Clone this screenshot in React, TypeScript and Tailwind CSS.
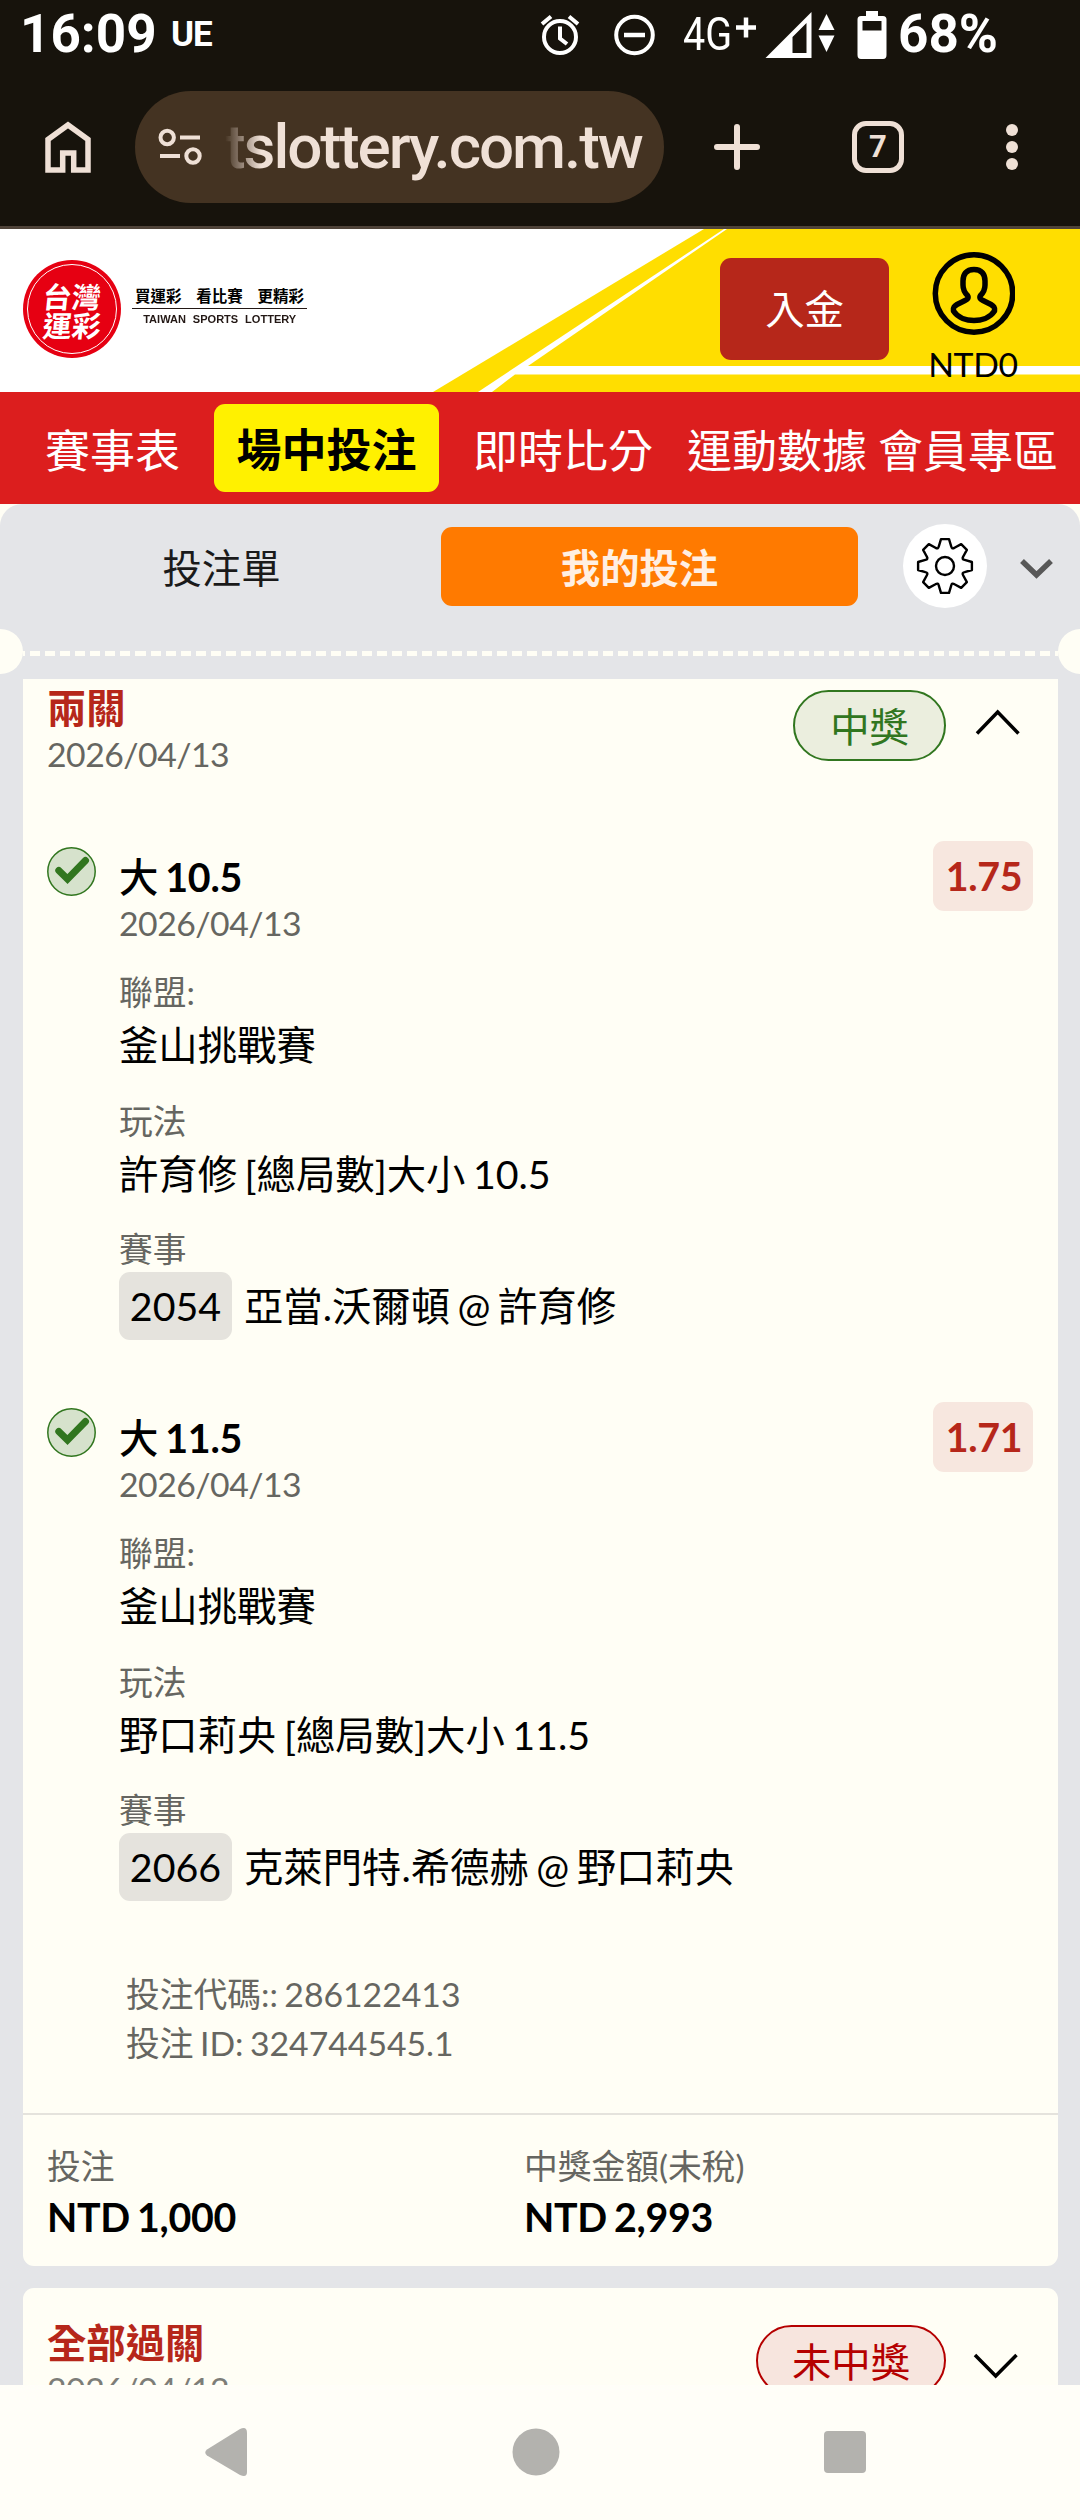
import React from "react";

const CJK = "font-['Lato','Noto_Sans_CJK_TC',sans-serif]";

function polar(angle: number, r: number) {
  const a = (angle * Math.PI) / 180;
  return `${(42 + r * Math.sin(a)).toFixed(2)} ${(42 - r * Math.cos(a)).toFixed(2)}`;
}

function gearPath() {
  let d = "";
  for (let i = 0; i < 8; i++) {
    const c = i * 45;
    d += `${i === 0 ? "M" : "L"}${polar(c - 8.5, 27.2)}L${polar(c + 8.5, 27.2)}`;
    d += `L${polar(c + 17.5, 20.6)}Q${polar(c + 22.5, 17.8)} ${polar(c + 27.5, 20.6)}`;
  }
  return d + "Z";
}

function StatusBar() {
  return (
    <div className="flex h-[68px] items-center bg-[#17130c] pl-[20px] font-['Roboto',sans-serif] text-white">
      <span className="w-[151px] text-[53px] leading-[66px] font-bold">16:09</span>
      <span className="mt-[2px] w-[46px] text-[35px] leading-[66px] font-bold tracking-[-1px]">UE</span>
      <svg className="ml-[321px]" width="44" height="66" viewBox="0 0 44 66" fill="none" stroke="#fff" strokeWidth="4">
        <circle cx="22" cy="36" r="16" />
        <path d="M22 25.500V37.500L29 43" strokeWidth="4" />
        <path d="M4 23L13 15.500M40 23L31 15.500" />
      </svg>
      <svg className="ml-[30px]" width="44" height="66" viewBox="0 0 44 66" fill="none" stroke="#fff" strokeWidth="4">
        <circle cx="22.500" cy="34" r="18.300" />
        <path d="M12 34H33" strokeWidth="4.500" />
      </svg>
      <span className="relative ml-[27px] block h-[66px] w-[81px]">
        <span className="block origin-left scale-x-[0.840] text-[47px] leading-[66px] font-normal">4G</span>
        <svg className="absolute top-0 left-0" width="81" height="66" viewBox="0 0 81 66">
          <path d="M53 26.500H73M63 16.500V36.500" stroke="#fff" strokeWidth="4.500" />
        </svg>
      </span>
      <svg width="72" height="66" viewBox="0 0 72 66" fill="#fff">
        <path fillRule="evenodd" d="M1.500 57L47.500 11V57ZM28.500 36V52H42.500V22Z" />
        <path d="M62.500 13L70.500 29H54.500ZM62.500 51L70.500 34.500H54.500Z" />
      </svg>
      <svg className="ml-[21px]" width="32" height="66" viewBox="0 0 32 66">
        <path fill="#fff" fillRule="evenodd" d="M9 10H21V15H26Q29.500 15 29.500 18.500V54Q29.500 58 26 58H4Q0.500 58 0.500 54V18.500Q0.500 15 4 15H9ZM5.500 20V29.500H24.500V20Z" />
      </svg>
      <span className="ml-[9px] text-[53px] leading-[66px] font-bold">68%</span>
    </div>
  );
}

function BrowserBar() {
  return (
    <div className="flex h-[161px] items-start border-b-[3px] border-[#4f4339] bg-[#17130c] pt-[23px]">
      <svg className="ml-[40px]" width="56" height="112" viewBox="0 0 56 112" fill="none" stroke="#efe0d6" strokeWidth="5.500">
        <path d="M8 79V48.500L28 34L48 48.500V79H33.700V62H22.700V79Z" />
      </svg>
      <div className="ml-[39px] flex h-[112px] w-[529px] items-center rounded-full bg-[#443322]">
        <svg className="ml-[22px]" width="48" height="44" viewBox="0 0 48 44" fill="none" stroke="#efe0d6" strokeWidth="4">
          <circle cx="10.200" cy="12.500" r="6.700" />
          <circle cx="36" cy="31" r="6.700" />
          <path d="M23 12.500H43M3 31H23" />
        </svg>
        <span className="ml-[20px] w-[430px] bg-[linear-gradient(90deg,#44332200_0px,#efe0d6_36px)] bg-clip-text font-['Roboto',sans-serif] text-[62px] leading-[82px] font-medium tracking-[-2.050px] whitespace-nowrap text-transparent">
          tslottery.com.tw
        </span>
      </div>
      <svg className="ml-[48px]" width="50" height="112" viewBox="0 0 50 112" stroke="#efe0d6" strokeWidth="6" strokeLinecap="round">
        <path d="M5 56H45M25 36V76" />
      </svg>
      <div className="mt-[30px] ml-[90px] flex h-[52px] w-[52px] items-center justify-center rounded-[14px] border-[5.500px] border-[#efe0d6] font-['Roboto',sans-serif] text-[31px] font-bold text-[#efe0d6]">
        7
      </div>
      <svg className="ml-[102px]" width="12" height="112" viewBox="0 0 12 112" fill="#efe0d6">
        <circle cx="6" cy="39" r="6" />
        <circle cx="6" cy="56" r="6" />
        <circle cx="6" cy="73" r="6" />
      </svg>
    </div>
  );
}

function SiteHeader() {
  return (
    <header className="relative flex h-[163px] items-start overflow-hidden bg-white">
      <svg className="absolute inset-0" width="1080" height="163" viewBox="0 0 1080 163" fill="#ffde00">
        <path d="M704 0H724L478 163H433Z" />
        <path d="M727 0H1080V137H528Z" />
        <path d="M515 145.500H1080V163H492Z" />
      </svg>
      <div className="relative mt-[31px] ml-[23px] flex h-[98px] w-[98px] items-center justify-center rounded-full bg-[#e60012]">
        <div className="flex h-[90px] w-[90px] flex-col items-center justify-center rounded-full border-[1.500px] border-white pt-[1px] font-['Noto_Sans_CJK_TC',sans-serif] text-[29px] font-bold text-white">
          <span className="-skew-x-6 leading-[29px]">台灣</span>
          <span className="-skew-x-6 leading-[29px]">運彩</span>
        </div>
      </div>
      <div className="relative mt-[54px] ml-[11px] flex w-[175px] flex-col items-center">
        <div className="flex h-[26px] w-full justify-between border-b border-[#231815] px-[3px] font-['Noto_Sans_CJK_TC',sans-serif] text-[15.500px] leading-[25px] font-bold text-black">
          <span>買運彩</span>
          <span>看比賽</span>
          <span>更精彩</span>
        </div>
        <span className="mt-[3px] font-['Liberation_Sans',sans-serif] text-[11.500px] leading-[15px] font-bold whitespace-nowrap text-[#231815] [word-spacing:4px]">
          <span className="inline-block scale-x-[0.960]">TAIWAN SPORTS LOTTERY</span>
        </span>
      </div>
      <button className={`relative mt-[29px] ml-[413px] h-[102px] w-[169px] rounded-[11px] bg-[#b6271a] text-[39.375px] leading-[102px] text-white ${CJK}`}>
        入金
      </button>
      <div className="relative mt-[23px] ml-[40px] flex w-[88px] flex-col items-center">
        <svg width="84" height="84" viewBox="0 0 84 84" fill="none" stroke="#000" strokeWidth="5.500" strokeLinejoin="round">
          <circle cx="43" cy="41.500" r="38.700" />
          <path d="M43 17.500C35 17.500 32 22.500 32 29V33C32 37 33.500 40.500 36.500 43.500C38 46 36.500 47.300 34 48.500L26 52.500C21.500 55 22.500 57 22.500 59C27 66 36 68.500 43 68.500S59 66 63.500 59C63.500 57 64.500 55 60 52.500L52 48.500C49.500 47.300 48 46 49.500 43.500C52.500 40.500 54 37 54 33V29C54 22.500 51 17.500 43 17.500Z" />
        </svg>
        <span className="mt-[8px] font-['Lato',sans-serif] text-[33.750px] leading-[40px] tracking-[-0.300px] text-black">NTD0</span>
      </div>
    </header>
  );
}

function MainNav() {
  return (
    <nav className={`flex h-[112px] items-center bg-[#dc1e1e] text-[45px] leading-[88px] whitespace-nowrap text-white ${CJK}`}>
      <span className="mt-[5px] ml-[45px]">賽事表</span>
      <span className="ml-[34px] h-[88px] w-[225px] rounded-[11px] bg-[#fff100] text-center leading-[92px] font-bold text-black">場中投注</span>
      <span className="mt-[5px] ml-[34px]">即時比分</span>
      <span className="mt-[5px] ml-[34px]">運動數據</span>
      <span className="mt-[5px] ml-[11px]">會員專區</span>
    </nav>
  );
}

function SlipTabs() {
  return (
    <div className={`flex h-[125px] items-start pt-[20px] text-[39.375px] ${CJK}`}>
      <span className="mt-[4px] w-[441px] pl-[2px] text-center leading-[79px] text-[#1a1a1a]">投注單</span>
      <span className="mt-[3px] h-[79px] w-[417px] rounded-[11px] bg-[#ff7a00] pr-[20px] text-center leading-[82px] font-bold text-[#ffefe3]">我的投注</span>
      <svg className="ml-[45px] rounded-full bg-white" width="84" height="84" viewBox="0 0 84 84" fill="none" stroke="#000" strokeWidth="2.400" strokeLinejoin="round">
        <path d={gearPath()} />
        <circle cx="42" cy="42" r="9" />
      </svg>
      <svg className="ml-[33px]" width="33" height="84" viewBox="0 0 33 84" fill="none" stroke="#585858" strokeWidth="5.500">
        <path d="M2 37L16.500 51L31 37" />
      </svg>
    </div>
  );
}

function Perforation() {
  return (
    <div className="flex h-[50px] items-start justify-between overflow-hidden">
      <div className="-ml-[22px] h-[45px] w-[45px] shrink-0 rounded-full bg-[#fffef5]" />
      <div className="mt-[22px] h-[5px] flex-1 bg-[repeating-linear-gradient(90deg,#fffef5_0px,#fffef5_2px,transparent_2px,transparent_7px,#fffef5_7px,#fffef5_15.070px)]" />
      <div className="-mr-[23px] h-[45px] w-[45px] shrink-0 rounded-full bg-[#fffef5]" />
    </div>
  );
}

type Leg = { pick: string; odds: string; market: string; code: string; match: string };

const legs: Leg[] = [
  { pick: "10.5", odds: "1.75", market: "許育修 [總局數]大小 10.5", code: "2054", match: "亞當.沃爾頓 @ 許育修" },
  { pick: "11.5", odds: "1.71", market: "野口莉央 [總局數]大小 11.5", code: "2066", match: "克萊門特.希德赫 @ 野口莉央" },
];

function LegRow({ leg }: { leg: Leg }) {
  return (
    <div className="flex h-[561px] items-start pr-[25px] pl-[24px]">
      <svg className="mt-[6px]" width="49" height="49" viewBox="0 0 49 49" fill="none">
        <circle cx="24.500" cy="24.500" r="23.700" fill="#d6e2cc" stroke="#31761f" strokeWidth="1.500" />
        <path d="M11.800 23.500L20.500 32L38.500 13.500" stroke="#31761f" strokeWidth="7" strokeLinecap="round" />
      </svg>
      <div className="mt-[13px] ml-[23px] flex-1 text-[39.375px] text-black [word-spacing:-2.600px]">
        <div className="h-[46px] leading-[46px] font-bold">
          <span className="font-medium">大</span> <span className="tracking-[-0.300px]">{leg.pick}</span>
        </div>
        <div className="h-[46px] text-[33.750px] leading-[46px] tracking-[-0.500px] text-[#666661]">2026/04/13</div>
        <div className="mt-[20px] text-[33.750px] leading-[53px] text-[#666661]">聯盟:</div>
        <div className="leading-[52px]">釜山挑戰賽</div>
        <div className="mt-[24px] text-[33.750px] leading-[52px] text-[#666661]">玩法</div>
        <div className="leading-[54px]">{leg.market}</div>
        <div className="mt-[25px] text-[33.750px] leading-[46px] text-[#666661]">賽事</div>
        <div className="flex h-[68px] items-center leading-[68px] whitespace-nowrap">
          <span className="mr-[12px] h-[68px] w-[113px] rounded-[11px] bg-[#e5e3dd] text-center">{leg.code}</span>
          <span>{leg.match}</span>
        </div>
      </div>
      <div className="h-[70px] w-[100px] rounded-[11px] bg-[#f7e7df] pl-[2px] text-center text-[39.375px] leading-[69px] font-bold tracking-[-0.300px] text-[#b6271a]">{leg.odds}</div>
    </div>
  );
}

function WonCard() {
  return (
    <section className="mx-[23px] h-[1587px] w-[1035px] rounded-b-[11px] bg-[#fffef5]">
      <div className="flex h-[162px] items-start pl-[24px]">
        <div className="w-[746px] pt-[6px]">
          <div className="text-[39.375px] leading-[46px] font-bold text-[#b6271a]">兩關</div>
          <div className="text-[33.750px] leading-[46px] tracking-[-0.500px] text-[#666661]">2026/04/13</div>
        </div>
        <div className="mt-[11px] h-[71px] w-[153px] rounded-full border-2 border-[#31761f] bg-[#ebeede] text-center text-[39.375px] leading-[69px] text-[#31761f]">中獎</div>
        <svg className="mt-[29px] ml-[29px]" width="46" height="28" viewBox="0 0 46 28" fill="none" stroke="#000" strokeWidth="3.500">
          <path d="M2 25.500L22.700 4L43.500 25.500" />
        </svg>
      </div>
      {legs.map((leg) => (
        <LegRow key={leg.code} leg={leg} />
      ))}
      <div className="h-[150px] pt-[7px] pl-[103px] text-[33.750px] leading-[49px] text-[#666661] [word-spacing:-2.200px]">
        <div>投注代碼:: 286122413</div>
        <div>投注 ID: 324744545.1</div>
      </div>
      <div className="flex h-[153px] border-t-2 border-[#e5e3dd] pt-[26px] pl-[24px]">
        <div className="w-[477px]">
          <div className="text-[33.750px] leading-[51px] text-[#666661]">投注</div>
          <div className="text-[39.375px] leading-[50px] font-bold tracking-[-0.300px] [word-spacing:-2.300px]">NTD 1,000</div>
        </div>
        <div>
          <div className="text-[33.750px] leading-[51px] text-[#666661]">中獎金額(未稅)</div>
          <div className="text-[39.375px] leading-[50px] font-bold tracking-[-0.300px] [word-spacing:-2.300px]">NTD 2,993</div>
        </div>
      </div>
    </section>
  );
}

function LostCard() {
  return (
    <section className="mx-[23px] mt-[22px] flex h-[97px] w-[1035px] items-start overflow-hidden rounded-t-[11px] bg-[#fffef5] pl-[24px]">
      <div className="w-[709px] pt-[32px]">
        <div className="text-[39.375px] leading-[46px] font-bold text-[#b6271a]">全部過關</div>
        <div className="text-[33.750px] leading-[46px] tracking-[-0.500px] text-[#7d7d78]">2026/04/12</div>
      </div>
      <div className="mt-[37px] h-[71px] w-[190px] rounded-full border-2 border-[#b50000] bg-[#f7e5de] text-center text-[39.375px] leading-[69px] text-[#b50000]">未中獎</div>
      <svg className="mt-[64px] ml-[27px]" width="46" height="28" viewBox="0 0 46 28" fill="none" stroke="#000" strokeWidth="3.500">
        <path d="M2 3L22.700 24L43.500 3" />
      </svg>
    </section>
  );
}

function SystemNav() {
  return (
    <div className="h-[135px] bg-[#fffef8]">
      <svg width="1080" height="135" viewBox="0 0 1080 135" fill="#b3b2ae">
        <path d="M207 64.500L240 44Q247 41 247 48V87Q247 93 240 90L207 70.500Q203.500 67.500 207 64.500Z" />
        <circle cx="536" cy="67" r="23.500" />
        <rect x="824" y="46" width="42" height="42" rx="4" />
      </svg>
    </div>
  );
}

export default function App() {
  return (
    <div className="h-[2520px] w-[1080px] overflow-hidden bg-[#fffef5]">
      <StatusBar />
      <BrowserBar />
      <SiteHeader />
      <MainNav />
      <main lang="zh-TW" className={`h-[1881px] overflow-hidden rounded-t-[22px] bg-[#e4e5e8] ${CJK}`}>
        <SlipTabs />
        <Perforation />
        <WonCard />
        <LostCard />
      </main>
      <SystemNav />
    </div>
  );
}
